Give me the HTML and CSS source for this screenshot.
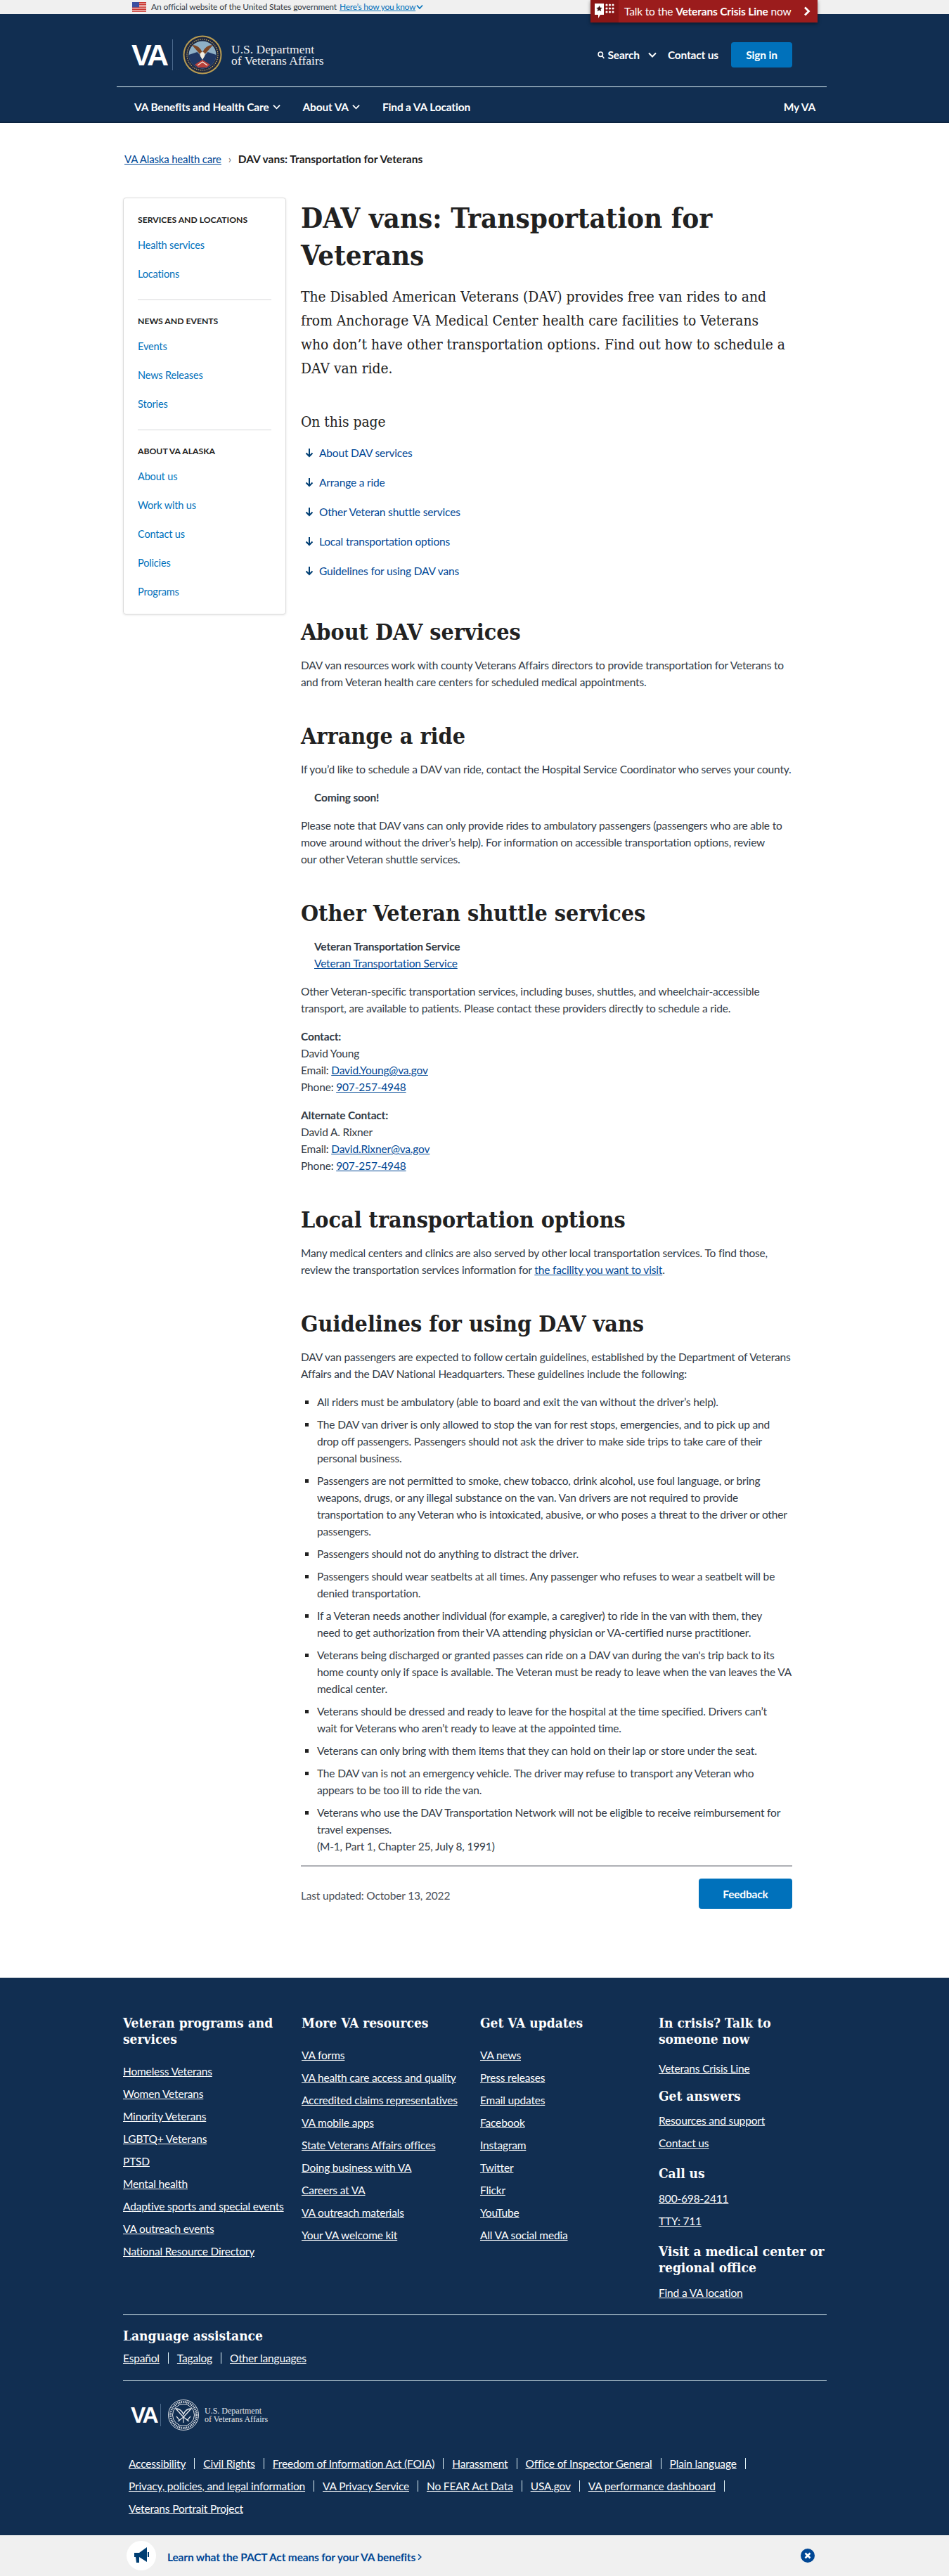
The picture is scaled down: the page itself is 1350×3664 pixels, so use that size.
FILE: index.html
```html
<!DOCTYPE html>
<html lang="en">
<head>
<meta charset="utf-8">
<title>DAV vans: Transportation for Veterans | VA Alaska health care</title>
<link rel="stylesheet" href="styles.css">
</head>
<body>
<div class="topbar">
  <svg class="flag" viewBox="0 0 20 14" width="20" height="14"><rect width="20" height="14" fill="#fff"/><g fill="#c8352f"><rect width="20" height="1.6"/><rect y="2.4" width="20" height="1.6"/><rect y="4.8" width="20" height="1.6"/><rect y="7.2" width="20" height="1.6"/><rect y="9.6" width="20" height="1.6"/><rect y="12.2" width="20" height="1.6"/></g><rect width="10" height="7.4" fill="#3c4fa0"/></svg>
  <span class="official">An official website of the United States government</span>
  <a class="know" href="#">Here’s how you know</a>
  <svg class="know-chev" viewBox="0 0 10 8" width="10" height="8"><path d="M1 1.500 5 6l4-4.500" fill="none" stroke="#0071bb" stroke-width="1.600"/></svg>
</div>
<a class="crisis" href="#">
  <span class="crisis-icon">
    <svg viewBox="0 0 30 28" width="30" height="28"><path d="M1 3h13v16H9l-3 5v-5H1z" fill="#fff"/><path d="m7.500 6 1.300 2.800 3 .3-2.200 2 .6 3-2.700-1.500-2.700 1.500.6-3-2.200-2 3-.3z" fill="#3a1414"/><g fill="#fff"><circle cx="18" cy="5" r="1.600"/><circle cx="22.500" cy="5" r="1.600"/><circle cx="27" cy="5" r="1.600"/><circle cx="18" cy="10" r="1.600"/><circle cx="22.500" cy="10" r="1.600"/><circle cx="27" cy="10" r="1.600"/><circle cx="18" cy="15" r="1.600"/><circle cx="22.500" cy="15" r="1.600"/><circle cx="27" cy="15" r="1.600"/></g></svg>
  </span>
  <span class="crisis-text">Talk to the <b>Veterans Crisis Line</b> now</span>
  <svg class="crisis-chev" viewBox="0 0 10 14" width="10" height="14"><path d="M2 1.500 7.500 7 2 12.500" fill="none" stroke="#fff" stroke-width="2.800"/></svg>
</a>
<header class="site-header">
  <div class="header-main">
    <a class="logo" href="#">
      <span class="logo-va">VA</span>
      <span class="logo-div"></span>
      <svg class="seal" viewBox="0 0 56 56" width="56" height="56">
        <circle cx="28" cy="28" r="27.500" fill="#b89c52"/>
        <circle cx="28" cy="28" r="25.500" fill="#1d2740"/>
        <circle cx="28" cy="28" r="22" fill="none" stroke="#c9ae63" stroke-width="1.200" stroke-dasharray="1.500 1.500"/>
        <circle cx="28" cy="28" r="19.500" fill="#8fb0c6"/>
        <path d="M8.500 28a19.500 19.500 0 0 0 39 0l-12-4-7 8-8-8z" fill="#1f3763"/>
        <path d="M28 31 13 14c8 0 12 4 15 11 3-7 7-11 15-11z" fill="#7c4524"/>
        <path d="M28 24c3 0 4 3 3 6l-3 5-3-5c-1-3 0-6 3-6z" fill="#f2ece0"/>
        <path d="M17 42l11-7 11 7-5 4h-12z" fill="#b8403a"/>
        <path d="M21 43l7-5 7 5" fill="none" stroke="#f2ece0" stroke-width="1.400"/>
      </svg>
      <span class="logo-text">U.S. Department<br>of Veterans Affairs</span>
    </a>
    <div class="header-actions">
      <svg class="search-ic" viewBox="0 0 10 11" width="10" height="11"><circle cx="4.300" cy="4.300" r="3.200" fill="none" stroke="#fff" stroke-width="1.500"/><path d="m6.700 6.700 2.700 3.300" stroke="#fff" stroke-width="1.500"/></svg>
      <a class="ha-link search" href="#">Search</a>
      <svg class="search-chev" viewBox="0 0 12 8" width="12" height="8"><path d="M1 1.500 6 6.500l5-5" fill="none" stroke="#fff" stroke-width="2"/></svg>
      <a class="ha-link contact" href="#">Contact us</a>
      <a class="signin" href="#">Sign in</a>
    </div>
  </div>
  <nav class="main-nav">
    <a class="nav-a nav-1" href="#">VA Benefits and Health Care<svg viewBox="0 0 12 8" width="11" height="8"><path d="M1 1.500 6 6.500l5-5" fill="none" stroke="#fff" stroke-width="2"/></svg></a>
    <a class="nav-a nav-2" href="#">About VA<svg viewBox="0 0 12 8" width="11" height="8"><path d="M1 1.500 6 6.500l5-5" fill="none" stroke="#fff" stroke-width="2"/></svg></a>
    <a class="nav-a nav-3" href="#">Find a VA Location</a>
    <a class="nav-a nav-4" href="#">My VA</a>
  </nav>
</header>

<div class="breadcrumb">
  <a href="#">VA Alaska health care</a>
  <span class="crumb-sep">›</span>
  <b>DAV vans: Transportation for Veterans</b>
</div>

<div class="layout">
  <aside class="sidenav">
    <h2 class="side-h">Services and locations</h2>
    <a href="#">Health services</a>
    <a href="#">Locations</a>
    <hr>
    <h2 class="side-h">News and events</h2>
    <a href="#">Events</a>
    <a href="#">News Releases</a>
    <a href="#">Stories</a>
    <hr>
    <h2 class="side-h">About VA Alaska</h2>
    <a href="#">About us</a>
    <a href="#">Work with us</a>
    <a href="#">Contact us</a>
    <a href="#">Policies</a>
    <a href="#">Programs</a>
  </aside>
  <main class="content">
    <h1>DAV vans: Transportation for Veterans</h1>
    <p class="lead">The Disabled American Veterans (DAV) provides free van rides to and from Anchorage VA Medical Center health care facilities to Veterans who don’t have other transportation options. Find out how to schedule a DAV van ride.</p>
    <p class="toc-title">On this page</p>
    <ul class="toc">
      <li><svg viewBox="0 0 12 14" width="12" height="14"><path d="M6 1v11M1.500 7.500 6 12l4.500-4.500" fill="none" stroke="#003e73" stroke-width="2"/></svg><a href="#">About DAV services</a></li>
      <li><svg viewBox="0 0 12 14" width="12" height="14"><path d="M6 1v11M1.500 7.500 6 12l4.500-4.500" fill="none" stroke="#003e73" stroke-width="2"/></svg><a href="#">Arrange a ride</a></li>
      <li><svg viewBox="0 0 12 14" width="12" height="14"><path d="M6 1v11M1.500 7.500 6 12l4.500-4.500" fill="none" stroke="#003e73" stroke-width="2"/></svg><a href="#">Other Veteran shuttle services</a></li>
      <li><svg viewBox="0 0 12 14" width="12" height="14"><path d="M6 1v11M1.500 7.500 6 12l4.500-4.500" fill="none" stroke="#003e73" stroke-width="2"/></svg><a href="#">Local transportation options</a></li>
      <li><svg viewBox="0 0 12 14" width="12" height="14"><path d="M6 1v11M1.500 7.500 6 12l4.500-4.500" fill="none" stroke="#003e73" stroke-width="2"/></svg><a href="#">Guidelines for using DAV vans</a></li>
    </ul>

    <h2>About DAV services</h2>
    <p>DAV van resources work with county Veterans Affairs directors to provide transportation for Veterans to and from Veteran health care centers for scheduled medical appointments.</p>

    <h2>Arrange a ride</h2>
    <p>If you’d like to schedule a DAV van ride, contact the Hospital Service Coordinator who serves your county.</p>
    <p class="callout"><b>Coming soon!</b></p>
    <p>Please note that DAV vans can only provide rides to ambulatory passengers (passengers who are able to move around without the driver’s help). For information on accessible transportation options, review<br>our other Veteran shuttle services.</p>

    <h2>Other Veteran shuttle services</h2>
    <p class="callout"><b>Veteran Transportation Service</b><br><a href="#">Veteran Transportation Service</a></p>
    <p>Other Veteran-specific transportation services, including buses, shuttles, and wheelchair-accessible transport, are available to patients. Please contact these providers directly to schedule a ride.</p>
    <p><b>Contact:</b><br>David Young<br>Email: <a href="#">David.Young@va.gov</a><br>Phone: <a href="#">907-257-4948</a></p>
    <p><b>Alternate Contact:</b><br>David A. Rixner<br>Email: <a href="#">David.Rixner@va.gov</a><br>Phone: <a href="#">907-257-4948</a></p>

    <h2>Local transportation options</h2>
    <p>Many medical centers and clinics are also served by other local transportation services. To find those, review the transportation services information for <a href="#">the facility you want to visit</a>.</p>

    <h2>Guidelines for using DAV vans</h2>
    <p>DAV van passengers are expected to follow certain guidelines, established by the Department of Veterans Affairs and the DAV National Headquarters. These guidelines include the following:</p>
    <ul class="rules">
      <li>All riders must be ambulatory (able to board and exit the van without the driver’s help).</li>
      <li>The DAV van driver is only allowed to stop the van for rest stops, emergencies, and to pick up and drop off passengers. Passengers should not ask the driver to make side trips to take care of their personal business.</li>
      <li>Passengers are not permitted to smoke, chew tobacco, drink alcohol, use foul language, or bring weapons, drugs, or any illegal substance on the van. Van drivers are not required to provide transportation to any Veteran who is intoxicated, abusive, or who poses a threat to the driver or other passengers.</li>
      <li>Passengers should not do anything to distract the driver.</li>
      <li>Passengers should wear seatbelts at all times. Any passenger who refuses to wear a seatbelt will be denied transportation.</li>
      <li>If a Veteran needs another individual (for example, a caregiver) to ride in the van with them, they<br>need to get authorization from their VA attending physician or VA-certified nurse practitioner.</li>
      <li>Veterans being discharged or granted passes can ride on a DAV van during the van's trip back to its home county only if space is available. The Veteran must be ready to leave when the van leaves the VA medical center.</li>
      <li>Veterans should be dressed and ready to leave for the hospital at the time specified. Drivers can’t<br>wait for Veterans who aren’t ready to leave at the appointed time.</li>
      <li>Veterans can only bring with them items that they can hold on their lap or store under the seat.</li>
      <li>The DAV van is not an emergency vehicle. The driver may refuse to transport any Veteran who appears to be too ill to ride the van.</li>
      <li>Veterans who use the DAV Transportation Network will not be eligible to receive reimbursement for travel expenses.<br>(M-1, Part 1, Chapter 25, July 8, 1991)</li>
    </ul>
    <div class="page-foot">
      <span class="updated">Last updated: October 13, 2022</span>
      <a class="feedback" href="#">Feedback</a>
    </div>
  </main>
</div>

<footer class="site-footer">
  <div class="f-cols">
    <div class="f-col">
      <h3>Veteran programs and services</h3>
      <ul>
        <li><a href="#">Homeless Veterans</a></li>
        <li><a href="#">Women Veterans</a></li>
        <li><a href="#">Minority Veterans</a></li>
        <li><a href="#">LGBTQ+ Veterans</a></li>
        <li><a href="#">PTSD</a></li>
        <li><a href="#">Mental health</a></li>
        <li><a href="#">Adaptive sports and special events</a></li>
        <li><a href="#">VA outreach events</a></li>
        <li><a href="#">National Resource Directory</a></li>
      </ul>
    </div>
    <div class="f-col">
      <h3>More VA resources</h3>
      <ul>
        <li><a href="#">VA forms</a></li>
        <li><a href="#">VA health care access and quality</a></li>
        <li><a href="#">Accredited claims representatives</a></li>
        <li><a href="#">VA mobile apps</a></li>
        <li><a href="#">State Veterans Affairs offices</a></li>
        <li><a href="#">Doing business with VA</a></li>
        <li><a href="#">Careers at VA</a></li>
        <li><a href="#">VA outreach materials</a></li>
        <li><a href="#">Your VA welcome kit</a></li>
      </ul>
    </div>
    <div class="f-col">
      <h3>Get VA updates</h3>
      <ul>
        <li><a href="#">VA news</a></li>
        <li><a href="#">Press releases</a></li>
        <li><a href="#">Email updates</a></li>
        <li><a href="#">Facebook</a></li>
        <li><a href="#">Instagram</a></li>
        <li><a href="#">Twitter</a></li>
        <li><a href="#">Flickr</a></li>
        <li><a href="#">YouTube</a></li>
        <li><a href="#">All VA social media</a></li>
      </ul>
    </div>
    <div class="f-col f-col-last">
      <h3 class="h-crisis">In crisis? Talk to someone now</h3>
      <ul><li><a href="#">Veterans Crisis Line</a></li></ul>
      <h3 class="h-answers">Get answers</h3>
      <ul>
        <li><a href="#">Resources and support</a></li>
        <li><a href="#">Contact us</a></li>
      </ul>
      <h3 class="h-sub">Call us</h3>
      <ul>
        <li><a href="#">800-698-2411</a></li>
        <li><a href="#">TTY: 711</a></li>
      </ul>
      <h3 class="h-sub">Visit a medical center or regional office</h3>
      <ul><li><a href="#">Find a VA location</a></li></ul>
    </div>
  </div>
  <div class="f-lang">
    <h3>Language assistance</h3>
    <ul class="sep-list lang-list">
      <li><a href="#">Español</a></li>
      <li><a href="#">Tagalog</a></li>
      <li><a href="#">Other languages</a></li>
    </ul>
  </div>
  <div class="f-logo">
    <span class="f-va">VA</span>
    <span class="f-div"></span>
    <svg class="f-seal" viewBox="0 0 44 44" width="44" height="44">
      <circle cx="22" cy="22" r="21.500" fill="#112e51" stroke="#e4e6ea" stroke-width="1"/>
      <circle cx="22" cy="22" r="18.500" fill="none" stroke="#e4e6ea" stroke-width="3" stroke-dasharray="1.300 1.300"/>
      <circle cx="22" cy="22" r="15.500" fill="none" stroke="#e4e6ea" stroke-width="1"/>
      <path d="M22 25 11 13c6 0 9 3 11 8 2-5 5-8 11-8z" fill="none" stroke="#e4e6ea" stroke-width="1.400"/>
      <path d="M22 25v8M14 31l8-6 8 6M12 24l5 6M32 24l-5 6" fill="none" stroke="#e4e6ea" stroke-width="1.200"/>
    </svg>
    <span class="f-logotext">U.S. Department<br>of Veterans Affairs</span>
  </div>
  <ul class="sep-list legal">
    <li><a href="#">Accessibility</a></li>
    <li><a href="#">Civil Rights</a></li>
    <li><a href="#">Freedom of Information Act (FOIA)</a></li>
    <li><a href="#">Harassment</a></li>
    <li><a href="#">Office of Inspector General</a></li>
    <li><a href="#">Plain language</a></li>
    <li><a href="#">Privacy, policies, and legal information</a></li>
    <li><a href="#">VA Privacy Service</a></li>
    <li><a href="#">No FEAR Act Data</a></li>
    <li><a href="#">USA.gov</a></li>
    <li><a href="#">VA performance dashboard</a></li>
    <li><a href="#">Veterans Portrait Project</a></li>
  </ul>
</footer>

<div class="promo">
  <span class="promo-circle">
    <svg viewBox="0 0 24 26" width="24" height="26"><path d="M2 9h7l11-8v21L9 15v8H5l-1-8H2z" fill="#003e73"/><path d="M22 8v7" stroke="#003e73" stroke-width="2"/></svg>
  </span>
  <a class="promo-link" href="#">Learn what the PACT Act means for your VA benefits<svg viewBox="0 0 8 12" width="6" height="10"><path d="M1.500 1 6.500 6l-5 5" fill="none" stroke="#004795" stroke-width="2"/></svg></a>
  <svg class="promo-close" viewBox="0 0 20 20" width="20" height="20"><circle cx="10" cy="10" r="10" fill="#004795"/><path d="m6.500 6.500 7 7m0-7-7 7" stroke="#fff" stroke-width="2.600"/></svg>
</div>
</body>
</html>
```
FILE: styles.css
```css
* { box-sizing: border-box; }
html, body { margin: 0; padding: 0; }
body { font-family: "Lato", "Liberation Sans", sans-serif; font-size: 15.5px; letter-spacing: -.17px; line-height: 24px; color: #323a45; background: #fff; position: relative; }
a { color: #004795; }
b { font-weight: 700; }
ul { list-style: none; margin: 0; padding: 0; }

.topbar { height: 20px; background: #f0f0f0; display: flex; align-items: center; padding-left: 188px; font-size: 12px; line-height: 20px; }
.flag { margin-right: 7px; }
.official { color: #323a45; letter-spacing: -.15px; }
.know { color: #0071bb; margin-left: 4px; letter-spacing: -.25px; }
.know-chev { margin-left: 1px; }

.crisis { position: absolute; top: 0; left: 840px; width: 323px; height: 32px; background: #9b1c1c; color: #fff; display: flex; align-items: center; text-decoration: none; box-shadow: 0 2px 5px rgba(0,0,0,.45); font-size: 15.5px; }
.crisis-icon { width: 40px; height: 32px; background: #8a1616; display: flex; align-items: center; justify-content: center; }
.crisis-text { margin-left: 8px; }
.crisis-chev { margin-left: auto; margin-right: 10px; }

.site-header { background: #112e51; height: 155px; border-bottom: 2px solid #0b2340; }
.header-main { margin: 0 174px 0 166px; height: 104px; padding: 13px 49px 0 21px; border-bottom: 1px solid #e1f3f8; display: flex; align-items: center; justify-content: space-between; }
.logo { display: flex; align-items: center; text-decoration: none; color: #fff; }
.logo-va { font-family: "Liberation Sans", sans-serif; font-weight: 700; font-size: 43px; line-height: 44px; letter-spacing: -3.5px; width: 52px; }
.logo-div { width: 1px; height: 44px; background: #4b6a8c; margin: 0 14px 0 6px; }
.seal { display: block; }
.logo-text { font-family: "Liberation Serif", serif; font-size: 17.5px; letter-spacing: 0; line-height: 16.5px; margin-left: 13px; color: #f1f1f1; }
.header-actions { display: flex; align-items: center; }
.ha-link { color: #fff; font-weight: 700; text-decoration: none; }
.search-ic { margin-right: 5px; }
.search-chev { margin-left: 12px; }
.contact { margin-left: 16px; }
.signin { margin-left: 18px; width: 87px; height: 36px; border-radius: 4px; background: #0071bb; color: #fff; font-weight: 700; text-decoration: none; display: flex; align-items: center; justify-content: center; }

.main-nav { margin: 0 174px 0 166px; padding: 16px 16px 0 25px; display: flex; align-items: center; }
.nav-a { color: #fff; font-weight: 700; text-decoration: none; display: inline-flex; align-items: center; gap: 5px; white-space: nowrap; }
.nav-2 { margin-left: 32px; }
.nav-3 { margin-left: 32px; }
.nav-4 { margin-left: auto; }

.breadcrumb { margin: 39px 0 43px 177px; height: 24px; font-size: 15.5px; color: #212121; }
.breadcrumb a { color: #004795; font-size: 15px; }
.breadcrumb b { letter-spacing: 0; }
.crumb-sep { color: #757575; margin: 0 6px; }

.layout { display: flex; align-items: flex-start; padding-left: 175px; }
.sidenav { width: 232px; border: 1px solid #dcdcdc; border-radius: 4px; box-shadow: 0 1px 3px rgba(0,0,0,.1); padding: 21px 20px; display: flex; flex-direction: column; }
.sidenav a { display: block; height: 20px; line-height: 20px; margin-top: 21px; color: #0071bb; text-decoration: none; font-size: 14.5px; letter-spacing: -.15px; }
.side-h { margin: 0 0 -5px; font-size: 12.2px; line-height: 20px; font-weight: 700; color: #212121; text-transform: uppercase; letter-spacing: 0; font-family: "Lato", sans-serif; }
.sidenav hr { border: 0; height: 1px; background: #d6d7d9; margin: 26px 0 20px; }

.content { width: 699px; margin-left: 21px; padding: 2px 0 98px; }
h1, .content h2 { font-family: "DejaVu Serif Condensed", "DejaVu Serif", serif; font-weight: 700; color: #212121; margin: 0; letter-spacing: 0; }
h1 { font-size: 40px; line-height: 53px; margin-bottom: 16px; }
.lead { font-family: "DejaVu Serif Condensed", "DejaVu Serif", serif; font-size: 20.8px; letter-spacing: 0; line-height: 34px; color: #212121; margin: 0 0 45px; max-width: 696px; }
.toc-title { font-family: "DejaVu Serif Condensed", "DejaVu Serif", serif; font-size: 20.8px; letter-spacing: 0; line-height: 28px; color: #212121; margin: 0 0 18px; }
.toc { margin-bottom: 55px; }
.toc li { display: flex; align-items: center; height: 24px; margin-bottom: 18px; padding-left: 6px; }
.toc li:last-child { margin-bottom: 0; }
.toc svg { margin-right: 8px; }
.toc a { text-decoration: none; color: #004795; }

.content h2 { font-size: 32px; line-height: 40px; margin: 45px 0 15px; }
.content p:not(.lead):not(.toc-title) { margin: 0 0 16px; }
.content p.callout { padding-left: 19px; }
.rules li { position: relative; padding-left: 23px; margin-bottom: 8px; }
.rules li:last-child { margin-bottom: 0; }
.rules li::before { content: ""; position: absolute; left: 6px; top: 10px; width: 5px; height: 5px; background: #212121; }
.page-foot { border-top: 2px solid #aeb0b5; margin-top: 15px; padding-top: 17px; display: flex; justify-content: space-between; align-items: center; }
.updated { color: #494f57; margin-top: 5px; }
.feedback { width: 133px; height: 43px; background: #0071bb; border-radius: 4px; color: #fff; font-weight: 700; text-decoration: none; display: flex; align-items: center; justify-content: center; }

.site-footer { background: #112e51; height: 793px; padding-top: 53px; color: #fff; }
.site-footer a { color: #fff; }
.site-footer h3 { font-family: "DejaVu Serif Condensed", "DejaVu Serif", serif; font-size: 19px; letter-spacing: 0; line-height: 23px; font-weight: 700; color: #fff; margin: 0 0 22px; }
.f-cols { display: grid; grid-template-columns: repeat(4, 254px); margin-left: 175px; height: 407px; }
.f-col { padding-right: 10px; }
.f-col li { margin-bottom: 8px; }
.f-col li:last-child { margin-bottom: 0; }
.f-col-last { padding-right: 0; width: 236px; }
.site-footer .h-crisis { margin-bottom: 18px; }
.site-footer .h-answers { margin: 16px 0 11px; }
.site-footer .h-sub { margin: 20px 0 12px; }
.f-lang { margin: 19px 174px 0 175px; padding: 18px 0 19px; border-top: 1px solid #e1f3f8; border-bottom: 1px solid #e1f3f8; }
.site-footer .f-lang h3 { margin-bottom: 8px; }
.sep-list { display: flex; flex-wrap: wrap; }
.sep-list li { display: flex; align-items: center; }
.sep-list li::after { content: ""; width: 1px; height: 16px; background: #e1f3f8; margin: 0 12px; }
.lang-list li:last-child::after, .legal li:last-child::after { display: none; }
.f-logo { display: flex; align-items: center; margin: 27px 0 0 186px; height: 44px; }
.f-va { font-family: "Liberation Sans", sans-serif; font-weight: 700; font-size: 32px; letter-spacing: -2.5px; width: 37px; }
.f-div { width: 1px; height: 32px; background: #4b6a8c; margin: 0 10px 0 5px; }
.f-seal { display: block; }
.f-logotext { font-family: "Liberation Serif", serif; font-size: 12px; letter-spacing: 0; line-height: 12px; margin-left: 8px; color: #e4e6ea; }
.legal { margin: 35px 174px 0 183px; row-gap: 8px; }

.promo { height: 58px; background: #f0f0f0; display: flex; align-items: center; padding-left: 180px; }
.promo-circle { width: 42px; height: 42px; border-radius: 50%; background: #fff; display: flex; align-items: center; justify-content: center; }
.promo-link { margin-left: 16px; font-weight: 700; color: #004795; text-decoration: none; display: inline-flex; align-items: center; gap: 3px; margin-top: 4px; }
.promo-close { margin-left: auto; margin-right: 191px; }
```
